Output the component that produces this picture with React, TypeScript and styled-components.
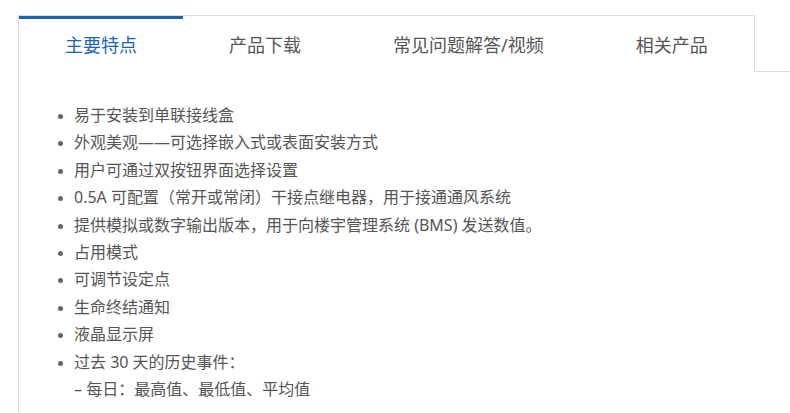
import styled, { createGlobalStyle } from "styled-components";

const Global = createGlobalStyle`
  html, body {
    margin: 0;
    background: #fff;
  }
  body {
    font-family: "Noto Sans", "Noto Sans CJK SC", sans-serif;
    color: #555;
  }
`;

const Page = styled.div`
  padding: 15px 0 0 18px;
`;

const Frame = styled.div`
  border-left: 1px solid #ddd;
  min-height: 398px;
`;

const TabRow = styled.div`
  display: flex;
`;

const Tabs = styled.ul`
  display: flex;
  margin: 0;
  padding: 0;
  list-style: none;
  border-top: 1px solid #ddd;
  border-right: 1px solid #ddd;
`;

const Tab = styled.li<{ $active?: boolean }>`
  box-sizing: border-box;
  height: 56px;
  padding: 0 46px 3px;
  display: flex;
  align-items: center;
  font-size: 18px;
  white-space: nowrap;
  color: ${(p) => (p.$active ? "#1866b4" : "#555")};
  border-top: 3px solid ${(p) => (p.$active ? "#1866b4" : "transparent")};
`;

const Filler = styled.div`
  flex: 1;
  border-bottom: 1px solid #ddd;
`;

const Panel = styled.div`
  padding: 30px 0 0 0;
`;

const Features = styled.ul`
  margin: 0;
  padding: 0 0 0 55px;
  font-size: 16px;
  line-height: 27.4px;

  li::marker {
    color: #666;
    font-size: 13px;
  }
`;

const SubLine = styled.div``;

const items = [
  "易于安装到单联接线盒",
  "外观美观——可选择嵌入式或表面安装方式",
  "用户可通过双按钮界面选择设置",
  "0.5A 可配置（常开或常闭）干接点继电器，用于接通通风系统",
  "提供模拟或数字输出版本，用于向楼宇管理系统 (BMS) 发送数值。",
  "占用模式",
  "可调节设定点",
  "生命终结通知",
  "液晶显示屏",
];

export default function App() {
  return (
    <Page>
      <Global />
      <Frame>
        <TabRow>
          <Tabs>
            <Tab $active>主要特点</Tab>
            <Tab>产品下载</Tab>
            <Tab>常见问题解答/视频</Tab>
            <Tab>相关产品</Tab>
          </Tabs>
          <Filler />
        </TabRow>
        <Panel>
          <Features>
            {items.map((t) => (
              <li key={t}>{t}</li>
            ))}
            <li>
              过去 30 天的历史事件：
              <SubLine>– 每日：最高值、最低值、平均值</SubLine>
            </li>
          </Features>
        </Panel>
      </Frame>
    </Page>
  );
}
